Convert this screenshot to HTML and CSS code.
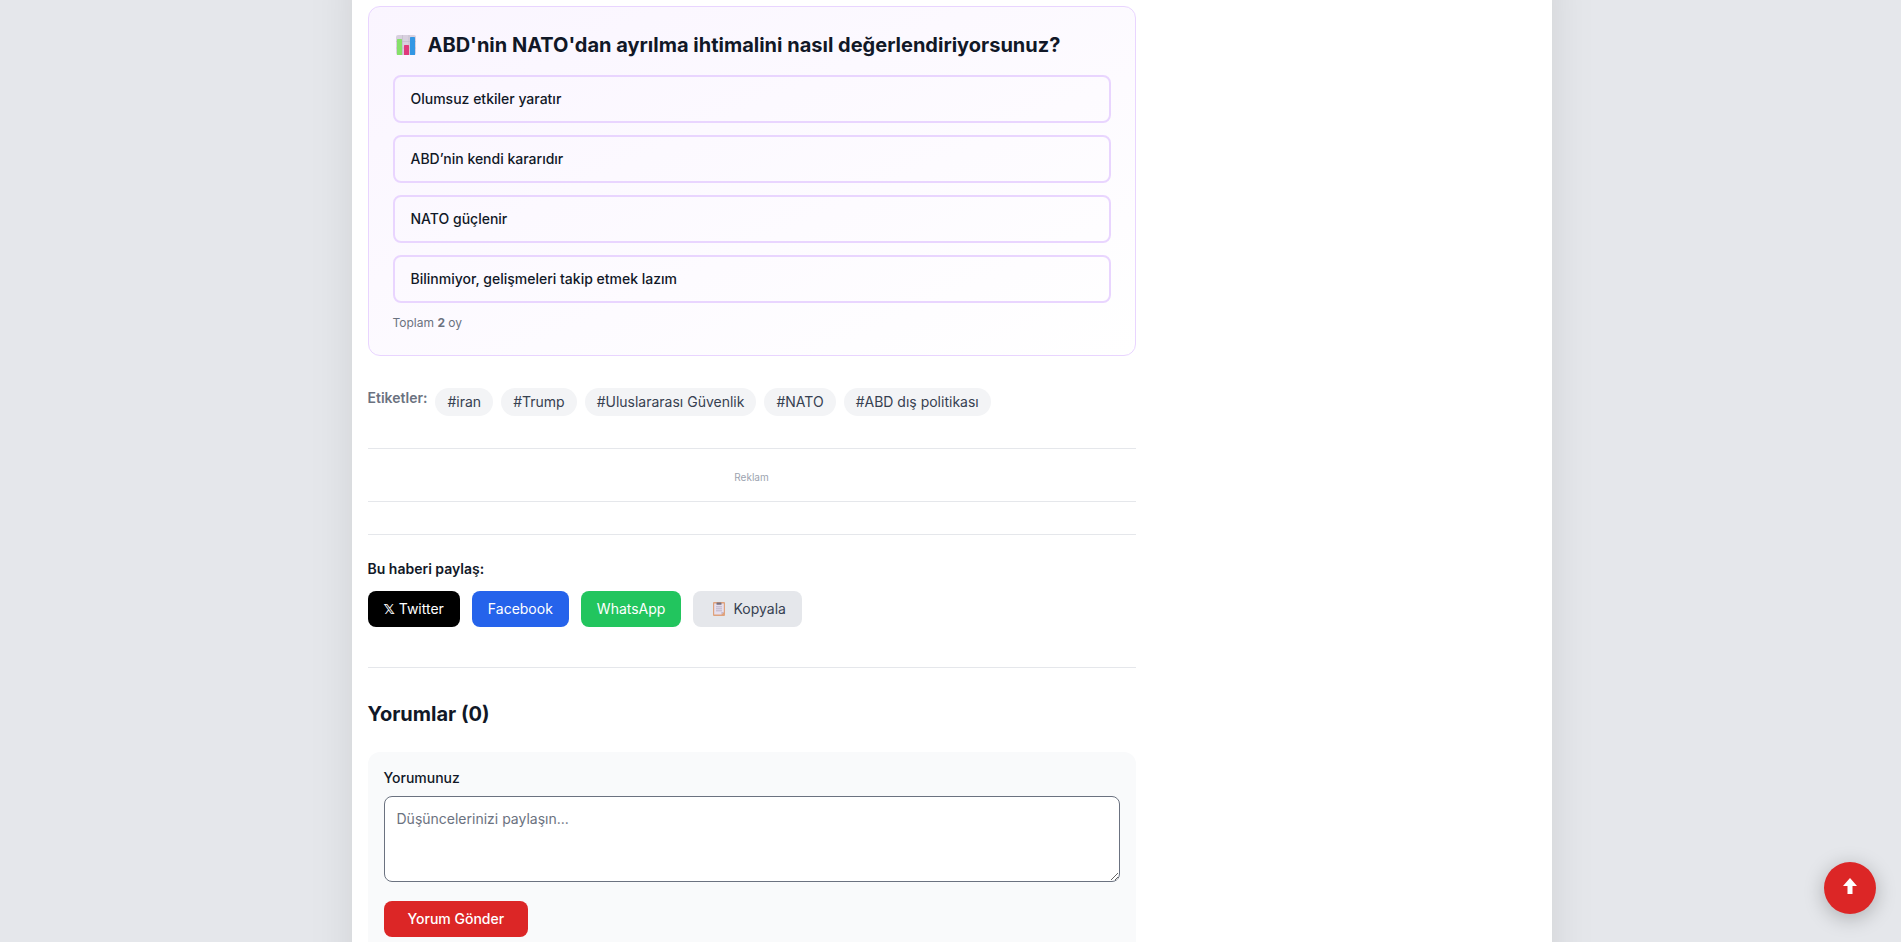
FILE: index.html
```
<!DOCTYPE html>
<html lang="tr">
<head>
    <meta charset="UTF-8">
    <meta name="viewport" content="width=device-width, initial-scale=1.0">
    <title>Haber Detayı</title>
    <link rel="stylesheet" href="styles.css">
</head>
<body>
    <div class="container">
        <main class="article">
            <section class="poll">
                <h2 class="poll-title">
                    <svg class="poll-icon" viewBox="0 0 20 20" aria-hidden="true">
                        <rect width="20" height="20" rx="2" fill="#d8d0df"/>
                        <path d="M0 6.5h20M0 13h20M6.5 0v20M13 0v20" stroke="#bfb8c8" stroke-width="0.6"/>
                        <rect x="1" y="4" width="5" height="16" rx="0.6" fill="#86e06a"/>
                        <rect x="8" y="10" width="5" height="10" rx="0.6" fill="#e0397c"/>
                        <rect x="14" y="2" width="5" height="18" rx="0.6" fill="#3397e4"/>
                    </svg>
                    ABD'nin NATO'dan ayrılma ihtimalini nasıl değerlendiriyorsunuz?
                </h2>
                <div class="poll-options">
                    <button type="button" class="poll-option">Olumsuz etkiler yaratır</button>
                    <button type="button" class="poll-option">ABD’nin kendi kararıdır</button>
                    <button type="button" class="poll-option">NATO güçlenir</button>
                    <button type="button" class="poll-option">Bilinmiyor, gelişmeleri takip etmek lazım</button>
                </div>
                <p class="poll-total">Toplam <strong>2</strong> oy</p>
            </section>

            <div class="tags">
                <span class="tags-label">Etiketler:</span>
                <a href="#" class="tag">#iran</a>
                <a href="#" class="tag">#Trump</a>
                <a href="#" class="tag">#Uluslararası Güvenlik</a>
                <a href="#" class="tag">#NATO</a>
                <a href="#" class="tag">#ABD dış politikası</a>
            </div>

            <div class="ad">Reklam</div>

            <section class="share">
                <p class="share-title">Bu haberi paylaş:</p>
                <div class="share-buttons">
                    <a href="#" class="btn btn-twitter"><span class="x-mark">𝕏</span> Twitter</a>
                    <a href="#" class="btn btn-facebook">Facebook</a>
                    <a href="#" class="btn btn-whatsapp">WhatsApp</a>
                    <button type="button" class="btn btn-copy">
                        <svg class="copy-icon" viewBox="0 0 12 14" aria-hidden="true">
                            <rect width="12" height="14" rx="1" fill="#dfa27c"/>
                            <path d="M1.2 1.6h9.6v8.4l-2.4 2.6H1.2z" fill="#e6dfee"/>
                            <path d="M10.8 10L8.4 12.6V10z" fill="#c3b8cc"/>
                            <rect x="3.5" y="0.4" width="5" height="2.3" rx="0.5" fill="#77707f"/>
                            <path d="M3 4.8h6M3 6.8h6M3 8.8h6" stroke="#b3a9bd" stroke-width="0.8"/>
                        </svg>
                        Kopyala
                    </button>
                </div>
            </section>

            <section class="comments">
                <h2 class="comments-title">Yorumlar (0)</h2>
                <form class="comment-form">
                    <label for="comment">Yorumunuz</label>
                    <textarea id="comment" rows="3" placeholder="Düşüncelerinizi paylaşın..."></textarea>
                    <button type="submit" class="btn btn-submit">Yorum Gönder</button>
                </form>
            </section>
        </main>
    </div>

    <button type="button" class="scroll-top" aria-label="Yukarı çık">
        <svg viewBox="0 0 14 16" aria-hidden="true">
            <path d="M7 0l7 8H9.5v8h-5V8H0z" fill="#fff"/>
        </svg>
    </button>
</body>
</html>
```
FILE: styles.css
```
* {
    box-sizing: border-box;
}
body {
    font-family: Inter, "DejaVu Sans", sans-serif;
    font-size: 14px;
    line-height: 20px;
    display: flow-root;
    margin: 0;
    padding-left: 2px;
    background-color: #e5e7eb;
    color: #111827;
}
h2, p {
    margin: 0;
}
a {
    text-decoration: none;
}
button, textarea {
    font: inherit;
}
button {
    cursor: pointer;
}
.container {
    display: grid;
    grid-template-columns: repeat(3, 1fr);
    gap: 32px;
    max-width: 1200px;
    margin: -80px auto 0;
    padding: 86px 16px 80px;
    background: white;
    box-shadow: 0 25px 50px -12px rgba(0,0,0,0.15);
}
.article {
    grid-column: span 2;
}

/* Anket */
.poll {
    padding: 24px;
    border: 1px solid #e9d5ff;
    border-radius: 12px;
    background: linear-gradient(to bottom right, #faf5ff, #ffffff);
}
.poll-title {
    display: flex;
    align-items: center;
    gap: 12px;
    margin-bottom: 16px;
    font-size: 20px;
    line-height: 28px;
}
.poll-icon {
    width: 20px;
    height: 20px;
    margin-left: 3px;
}
.poll-options {
    display: grid;
    gap: 12px;
}
.poll-option {
    padding: 12px 16px;
    border: 2px solid #e9d5ff;
    border-radius: 8px;
    background: transparent;
    color: #111827;
    font-weight: 500;
    text-align: left;
}
.poll-option:hover {
    border-color: #c084fc;
}
.poll-total {
    margin-top: 12px;
    color: #6b7280;
    font-size: 12px;
    line-height: 16px;
}

/* Etiketler */
.tags {
    display: flex;
    flex-wrap: wrap;
    align-items: flex-start;
    gap: 8px;
    margin: 32px 0;
}
.tags-label {
    color: #6b7280;
    font-weight: 600;
}
.tag {
    padding: 4px 12px;
    border-radius: 14px;
    background-color: #f3f4f6;
    color: #374151;
}

/* Reklam */
.ad {
    margin-bottom: 32px;
    padding: 20px 0 16px;
    border-top: 1px solid #e5e7eb;
    border-bottom: 1px solid #e5e7eb;
    color: #9ca3af;
    font-size: 10px;
    line-height: 16px;
    text-align: center;
}

/* Paylaş */
.share {
    padding: 24px 0 40px;
    border-top: 1px solid #e5e7eb;
}
.share-title {
    margin-bottom: 12px;
    font-weight: 600;
}
.share-buttons {
    display: flex;
    flex-wrap: wrap;
    gap: 12px;
}
.btn {
    padding: 8px 16px;
    border: none;
    border-radius: 8px;
    color: white;
}
.btn-twitter {
    background-color: #000000;
}
.x-mark {
    font-weight: 700;
}
.btn-facebook {
    background-color: #2563eb;
}
.btn-whatsapp {
    background-color: #22c55e;
}
.btn-copy {
    display: flex;
    align-items: center;
    gap: 8px;
    padding-left: 20px;
    background-color: #e5e7eb;
    color: #374151;
}
.copy-icon {
    width: 12px;
    height: 14px;
}

/* Yorumlar */
.comments {
    padding-top: 32px;
    border-top: 1px solid #e5e7eb;
}
.comments-title {
    margin-bottom: 24px;
    font-size: 20px;
    line-height: 28px;
}
.comment-form {
    padding: 16px;
    border-radius: 12px;
    background-color: #f9fafb;
}
.comment-form label {
    display: block;
    margin-bottom: 8px;
    font-weight: 500;
}
.comment-form textarea {
    display: block;
    width: 100%;
    margin-bottom: 19px;
    padding: 12px;
    border: 1px solid #6b7280;
    border-radius: 8px;
    background-color: white;
}
.comment-form textarea::placeholder {
    color: #6b7280;
}
.btn-submit {
    padding: 8px 24px;
    font-weight: 500;
    background-color: #dc2626;
}

.scroll-top {
    position: fixed;
    right: 25px;
    bottom: 28px;
    display: flex;
    align-items: center;
    justify-content: center;
    width: 52px;
    height: 52px;
    padding: 0 0 4px;
    border: none;
    border-radius: 50%;
    background-color: #dc2626;
    box-shadow: 0 4px 20px rgba(0,0,0,0.25);
}
.scroll-top svg {
    width: 14px;
    height: 16px;
}
```
